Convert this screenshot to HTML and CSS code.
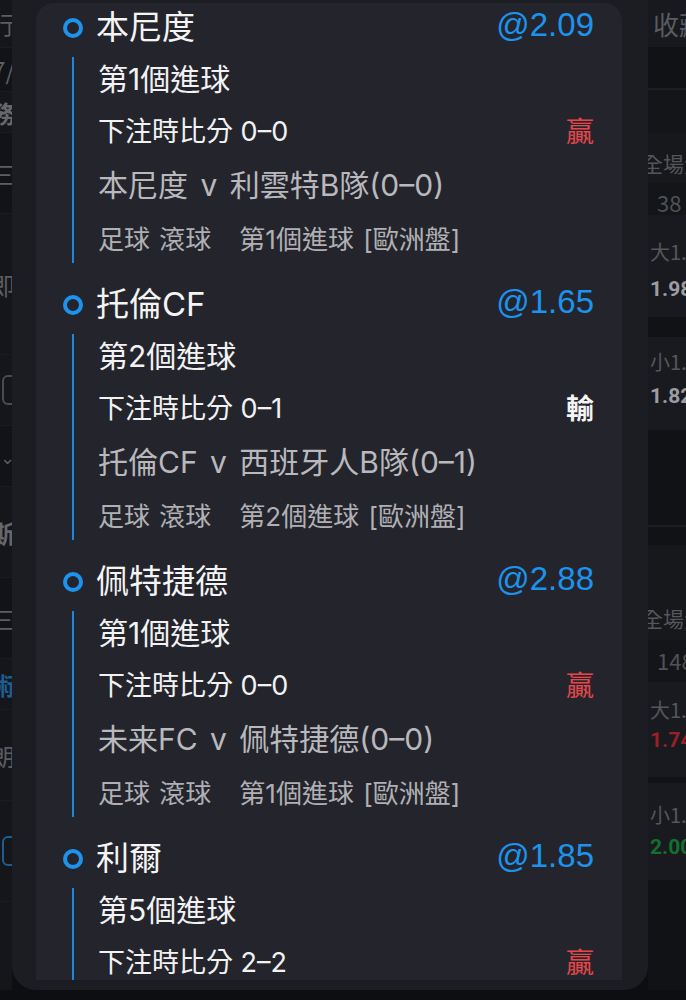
FILE: index.html
```html
<!DOCTYPE html>
<html lang="zh-Hant">
<head>
<meta charset="utf-8">
<title>注單詳情</title>
<link rel="stylesheet" href="styles.css">
</head>
<body>
<div class="page">
  <div class="side side-left">
    <div class="srow h47"><span class="sl-text">進行</span></div>
    <div class="srow h43 dark"><span class="sl-text">07/</span></div>
    <div class="srow h40"><span class="sl-text bold">服務</span></div>
    <div class="srow h80 dark"><span class="sl-text">三</span></div>
    <div class="srow h140"><span class="sl-text">即</span></div>
    <div class="srow h70"><span class="sl-box"></span></div>
    <div class="srow h60 dark"><span class="sl-text small">⌄</span></div>
    <div class="srow h90"><span class="sl-text bold">斯</span></div>
    <div class="srow h80 dark"><span class="sl-text">三</span></div>
    <div class="srow h50"><span class="sl-text bold blue">術</span></div>
    <div class="srow h90"><span class="sl-text">朗</span></div>
    <div class="srow h100"><span class="sl-box blue-box"></span></div>
  </div>

  <div class="modal">
    <div class="card">
      <div class="bet">
        <div class="bet-head">
          <span class="dot"></span>
          <span class="team">本尼度</span>
          <span class="odds">@2.09</span>
        </div>
        <div class="bet-body">
          <div class="market">第1個進球</div>
          <div class="score"><span>下注時比分 0–0</span><span class="result win">贏</span></div>
          <div class="match">本尼度 v 利雲特B隊(0–0)</div>
          <div class="meta">足球 滾球<span class="gap"></span>第1個進球 [歐洲盤]</div>
        </div>
      </div>

      <div class="bet">
        <div class="bet-head">
          <span class="dot"></span>
          <span class="team">托倫CF</span>
          <span class="odds">@1.65</span>
        </div>
        <div class="bet-body">
          <div class="market">第2個進球</div>
          <div class="score"><span>下注時比分 0–1</span><span class="result lose">輸</span></div>
          <div class="match">托倫CF v 西班牙人B隊(0–1)</div>
          <div class="meta">足球 滾球<span class="gap"></span>第2個進球 [歐洲盤]</div>
        </div>
      </div>

      <div class="bet">
        <div class="bet-head">
          <span class="dot"></span>
          <span class="team">佩特捷德</span>
          <span class="odds">@2.88</span>
        </div>
        <div class="bet-body">
          <div class="market">第1個進球</div>
          <div class="score"><span>下注時比分 0–0</span><span class="result win">贏</span></div>
          <div class="match">未来FC v 佩特捷德(0–0)</div>
          <div class="meta">足球 滾球<span class="gap"></span>第1個進球 [歐洲盤]</div>
        </div>
      </div>

      <div class="bet">
        <div class="bet-head">
          <span class="dot"></span>
          <span class="team">利爾</span>
          <span class="odds">@1.85</span>
        </div>
        <div class="bet-body">
          <div class="market">第5個進球</div>
          <div class="score"><span>下注時比分 2–2</span><span class="result win">贏</span></div>
        </div>
      </div>
    </div>
  </div>

  <div class="side side-right">
    <div class="rblock b47"><span class="rt big">收藏</span></div>
    <div class="rblock b41 darker"></div>
    <div class="rblock b2 sep"></div>
    <div class="rblock b43 mid"></div>
    <div class="rblock b50 head pt17"><span class="rt shift">全場大</span></div>
    <div class="rblock b32 mid pt6"><span class="rt num">38</span></div>
    <div class="rblock b102 card1">
      <span class="rt small">大1.</span>
      <span class="rt val">1.98</span>
    </div>
    <div class="rblock b20 darker"></div>
    <div class="rblock b93 card2">
      <span class="rt small">小1.</span>
      <span class="rt val">1.82</span>
    </div>
    <div class="rblock b95 darker"></div>
    <div class="rblock b2 sep"></div>
    <div class="rblock b18 darker"></div>
    <div class="rblock b95 head pt60"><span class="rt shift">全場大</span></div>
    <div class="rblock b42 mid pt7"><span class="rt num">148</span></div>
    <div class="rblock b95 card3">
      <span class="rt small">大1.5</span>
      <span class="rt val red">1.74</span>
    </div>
    <div class="rblock b6 darker"></div>
    <div class="rblock b97 card4">
      <span class="rt small">小1.5</span>
      <span class="rt val green">2.00</span>
    </div>
    <div class="rblock fill darker"></div>
  </div>
</div>
</body>
</html>
```

FILE: styles.css
```css
html, body {
  margin: 0;
  padding: 0;
}

body {
  background: #0d0e11;
  height: 1000px;
  overflow: hidden;
  font-family: "Noto Sans CJK TC", "Noto Sans", sans-serif;
}

.page {
  display: flex;
  height: 990px;
}

/* ---------- dimmed page behind the sheet ---------- */
.side {
  display: flex;
  flex-direction: column;
  overflow: hidden;
  background: #15161a;
}

.side-left {
  width: 12px;
  flex: none;
}

.srow {
  display: flex;
  justify-content: flex-end;
  align-items: center;
  border-bottom: 1px solid #1b1c21;
  flex: none;
}

.srow.dark { background: #121317; }

.h40 { height: 40px; }
.h43 { height: 43px; }
.h47 { height: 47px; }
.h50 { height: 50px; }
.h60 { height: 60px; }
.h70 { height: 70px; }
.h80 { height: 80px; }
.h90 { height: 90px; }
.h100 { height: 100px; }
.h140 { height: 140px; }

.sl-text {
  white-space: nowrap;
  color: #5c5d63;
  font-size: 24px;
  margin-right: -3px;
}

.sl-text.bold { font-weight: 700; color: #66676c; }
.sl-text.small { font-size: 18px; }
.sl-text.blue { color: #1d5d8f; }

.sl-box {
  width: 14px;
  height: 26px;
  border: 2px solid #4a4b50;
  border-radius: 6px;
  margin-right: -8px;
  flex: none;
}

.sl-box.blue-box { border-color: #1d5d8f; }

.side-right {
  flex: 1;
  background: #131418;
}

.rblock {
  flex: none;
  display: flex;
  flex-direction: column;
  align-items: flex-start;
  white-space: nowrap;
  overflow: hidden;
  box-sizing: border-box;
  background: #18191e;
}

.b2 { height: 2px; }
.b6 { height: 6px; }
.b18 { height: 18px; }
.b20 { height: 20px; }
.b32 { height: 32px; }
.b41 { height: 41px; }
.b42 { height: 42px; }
.b43 { height: 43px; }
.b47 { height: 47px; padding-top: 11px; }
.b50 { height: 50px; }
.b93 { height: 93px; }
.b95 { height: 95px; }
.b97 { height: 97px; }
.b102 { height: 102px; }
.fill { flex: 1; }

.pt6 { padding-top: 6px; }
.pt7 { padding-top: 7px; }
.pt17 { padding-top: 17px; }
.pt60 { padding-top: 60px; }

.rblock.darker { background: #111215; }
.rblock.sep { background: #1d1e23; }
.rblock.mid { background: #141519; }
.rblock.head { background: #17181c; }

.card1, .card2, .card3, .card4 { background: #191a1f; }
.card1 { padding-top: 24px; gap: 11px; }
.card2 { padding-top: 12px; gap: 8px; }
.card3 { padding-top: 15px; gap: 4px; }
.card4 { padding-top: 19px; gap: 6px; }

.rt {
  color: #55565b;
  font-size: 21px;
  line-height: 26px;
  margin-left: 4px;
}

.rt.big { font-size: 26px; margin-left: 5px; color: #5a5b60; }
.rt.shift { margin-left: -6px; }
.rt.num { margin-left: 9px; color: #505156; font-size: 22px; }
.rt.small { font-size: 20px; margin-left: 2px; }
.rt.val {
  font-family: "Roboto", "Noto Sans", sans-serif;
  font-weight: 700;
  color: #9c9da2;
  font-size: 21px;
  margin-left: 2px;
}
.rt.val.red { color: #9a1f26; }
.rt.val.green { color: #12702e; }

/* ---------- bottom sheet ---------- */
.modal {
  width: 636px;
  flex: none;
  background: #1c1d23;
  border-radius: 0 0 24px 24px;
  padding: 3px 26px 10px 24px;
  box-sizing: border-box;
  display: flex;
  flex-direction: column;
}

.card {
  flex: 1;
  background: #24252c;
  border-radius: 18px 18px 0 0;
  overflow: hidden;
  padding: 0 28px 0 27px;
  font-family: "Inter", "Noto Sans CJK TC", sans-serif;
}

.bet {
  margin-bottom: 14px;
}

.bet:first-child {
  margin-top: -3px;
}

.bet-head {
  height: 50px;
  display: flex;
  align-items: center;
}

.dot {
  width: 20px;
  height: 20px;
  box-sizing: border-box;
  border: 4px solid #1c93ec;
  border-radius: 50%;
  flex: none;
  margin-top: 6px;
}

.team {
  margin-left: 13px;
  font-size: 33px;
  color: #f4f4f5;
  flex: 1;
}

.odds {
  font-family: "Liberation Sans", "Noto Sans", sans-serif;
  font-size: 33px;
  color: #1c93ec;
}

.bet-body {
  margin-top: 7px;
  margin-left: 9px;
  border-left: 2px solid #1c88dd;
  padding-left: 24px;
  height: 206px;
  box-sizing: border-box;
}

.market, .score, .match, .meta {
  height: 44px;
  line-height: 44px;
  white-space: nowrap;
}

.market {
  font-size: 30px;
  color: #f2f2f3;
}

.score {
  margin-top: 9px;
  font-size: 27px;
  color: #f2f2f3;
  display: flex;
  justify-content: space-between;
}

.result {
  font-size: 28px;
}

.result.win { color: #e5474b; }
.result.lose { color: #f4f4f5; font-weight: 700; }

.match {
  margin-top: 9px;
  font-size: 30px;
  word-spacing: 4px;
  color: #b9b9bd;
}

.meta {
  margin-top: 11px;
  font-size: 26px;
  word-spacing: 2px;
  color: #b0b0b4;
}

.gap {
  display: inline-block;
  width: 28px;
}
```
